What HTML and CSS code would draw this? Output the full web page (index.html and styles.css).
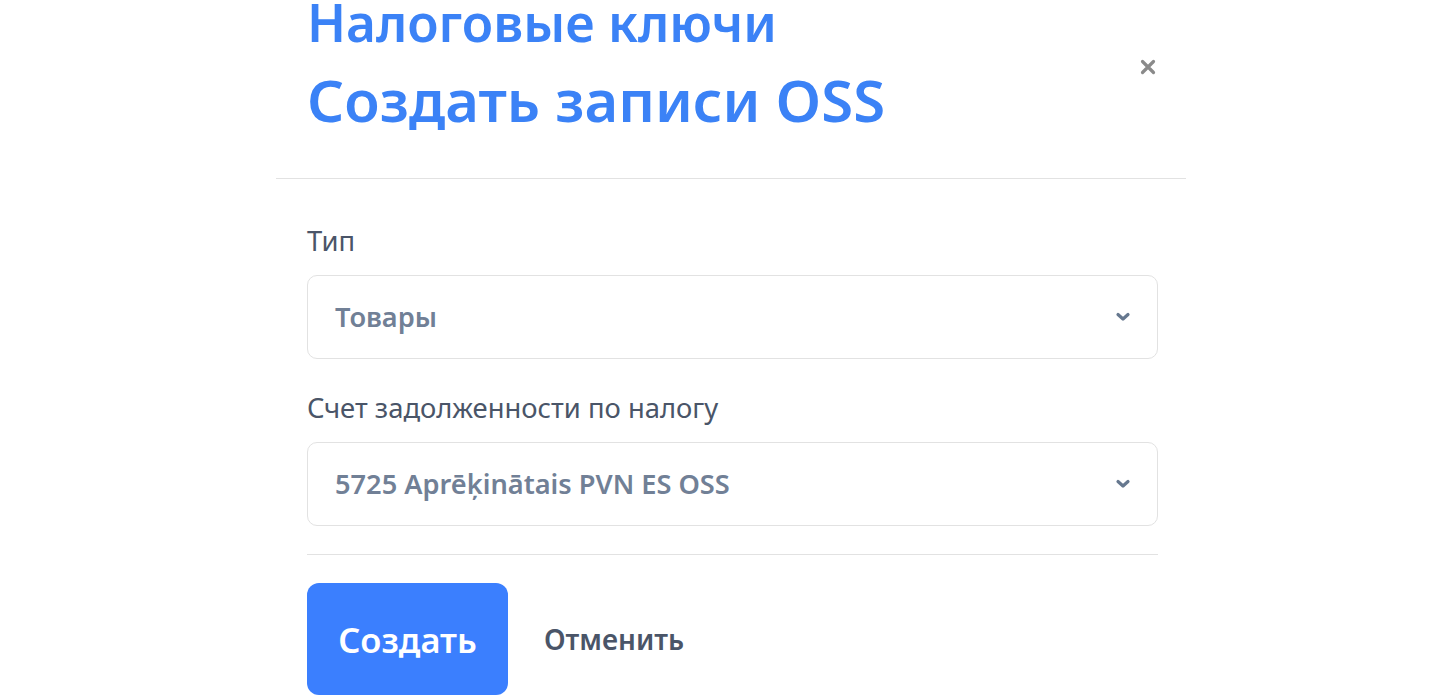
FILE: index.html
```html
<!DOCTYPE html>
<html lang="ru">
<head>
<meta charset="utf-8">
<link rel="stylesheet" href="styles.css">
</head>
<body>
<div class="modal">
  <div class="modal-header">
    <h1 class="title"><span class="title-top">Налоговые ключи</span><span class="title-main">Создать записи OSS</span></h1>
    <button class="close" aria-label="Закрыть">
      <svg width="16" height="16" viewBox="0 0 16 16"><path d="M2.5 2.5L13.5 13.5M13.5 2.5L2.5 13.5" stroke="#8a8a8a" stroke-width="3.2" stroke-linecap="round"/></svg>
    </button>
  </div>
  <div class="modal-body">
    <div class="field">
      <label class="label">Тип</label>
      <div class="select">
        <span class="value">Товары</span>
        <svg class="chev" width="16" height="10" viewBox="0 0 16 10"><path d="M3 2.5L8 7L13 2.5" fill="none" stroke="#66788f" stroke-width="3.2" stroke-linecap="round" stroke-linejoin="round"/></svg>
      </div>
    </div>
    <div class="field">
      <label class="label">Счет задолженности по налогу</label>
      <div class="select">
        <span class="value">5725 Aprēķinātais PVN ES OSS</span>
        <svg class="chev" width="16" height="10" viewBox="0 0 16 10"><path d="M3 2.5L8 7L13 2.5" fill="none" stroke="#66788f" stroke-width="3.2" stroke-linecap="round" stroke-linejoin="round"/></svg>
      </div>
    </div>
    <div class="footer">
      <button class="btn-primary">Создать</button>
      <button class="btn-link">Отменить</button>
    </div>
  </div>
</div>
</body>
</html>
```
FILE: styles.css
```css
html, body {
  margin: 0;
  padding: 0;
  background: #fff;
  overflow: hidden;
}
body {
  font-family: "Noto Sans", "Open Sans", sans-serif;
  height: 700px;
}
.modal {
  width: 910px;
  margin-left: 276px;
  margin-top: -16px;
}
.modal-header {
  display: flex;
  justify-content: space-between;
  align-items: center;
  padding: 0 30px 40px 31px;
  border-bottom: 1px solid #e2e2e2;
}
.title {
  margin: 0;
  font-weight: 600;
  color: #3b82f6;
  display: flex;
  flex-direction: column;
}
.title-top {
  font-size: 51.4px;
  line-height: 77px;
}
.title-main {
  font-size: 58px;
  line-height: 77px;
}
.close {
  background: none;
  border: 0;
  padding: 0;
  width: 16px;
  height: 16px;
  margin-top: 12px;
  display: flex;
}
.modal-body {
  padding: 41px 28px 0 31px;
  display: flex;
  flex-direction: column;
  gap: 28px;
}
.field {
  display: flex;
  flex-direction: column;
  gap: 13px;
}
.label {
  font-size: 27.4px;
  line-height: 42px;
  color: #4a5568;
}
.select {
  height: 84px;
  box-sizing: border-box;
  border: 1px solid #e2e2e2;
  border-radius: 10px;
  display: flex;
  align-items: center;
  justify-content: space-between;
  padding: 0 26px 0 27px;
}
.value {
  font-size: 27.2px;
  font-weight: 600;
  color: #718096;
  line-height: 38px;
}
.chev {
  display: block;
}
.footer {
  border-top: 1px solid #e2e2e2;
  padding-top: 28px;
  display: flex;
  align-items: center;
  gap: 36px;
}
.btn-primary {
  width: 201px;
  height: 112px;
  border: 0;
  border-radius: 12px;
  background: #3b7ffe;
  color: #fff;
  font-family: inherit;
  font-size: 34.5px;
  font-weight: 600;
  padding: 0;
}
.btn-link {
  background: none;
  border: 0;
  padding: 0;
  font-family: inherit;
  font-size: 28px;
  font-weight: 600;
  color: #4a5568;
}
```
